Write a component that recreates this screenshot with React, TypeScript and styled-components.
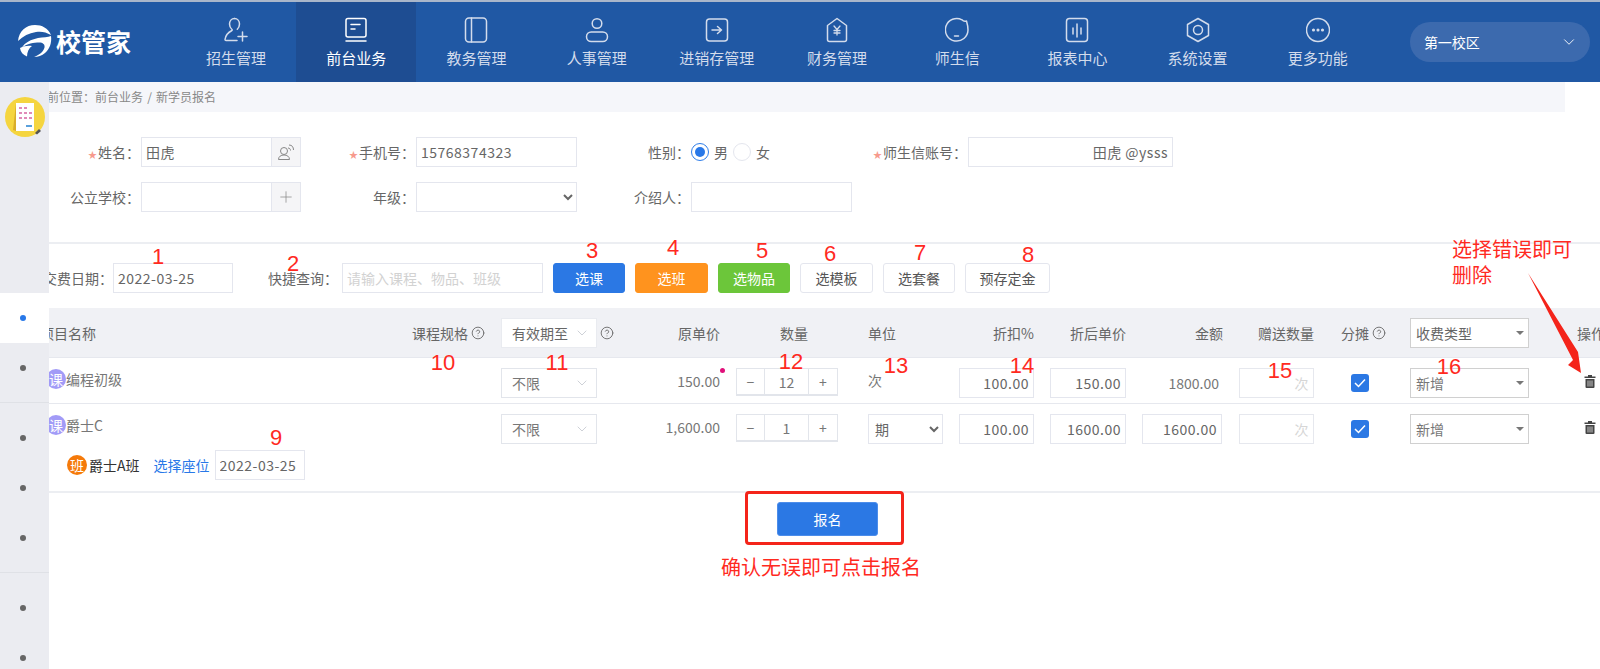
import React from "react";
import styled, { createGlobalStyle } from "styled-components";
import { CircleHelp, ChevronDown, Plus } from "lucide-react";

const GlobalStyle = createGlobalStyle`
  html, body { margin: 0; padding: 0; overflow: hidden; background: #fff; }
  * { box-sizing: border-box; }
  body { font-family: "Noto Sans CJK SC", "Noto Sans", sans-serif; font-size: 14px; color: #666; }
  input, select, button { font-family: inherit; }
`;

const Page = styled.div`
  position: relative;
  width: 1600px;
  height: 669px;
  overflow: hidden;
  background: #fff;
`;

/* ---------- header ---------- */
const Header = styled.header`
  display: flex;
  height: 82px;
  border-top: 2px solid #a9b6ca;
  background: #2058a4;
`;
const Logo = styled.div`
  display: flex;
  align-items: center;
  gap: 4px;
  width: 176px;
  padding: 0 0 2px 17px;
  color: #fff;
`;
const LogoText = styled.span`
  font-size: 25px;
  line-height: 30px;
  font-weight: 700;
  letter-spacing: 0;
`;
const NavItem = styled.div<{ $active?: boolean }>`
  display: flex;
  flex-direction: column;
  align-items: center;
  width: 120.2px;
  padding-top: 15px;
  color: ${(p) => (p.$active ? "#fff" : "#d3dcec")};
  background: ${(p) => (p.$active ? "#1e4d92" : "transparent")};
  svg { display: block; }
`;
const NavLabel = styled.span`
  margin-top: 5px;
  font-size: 15px;
  line-height: 20px;
  white-space: nowrap;
`;
const School = styled.div`
  display: flex;
  align-items: center;
  justify-content: space-between;
  width: 180px;
  height: 40px;
  margin: 20px 0 0 32px;
  padding: 0 12px 0 14px;
  border-radius: 20px;
  background: #3c6aae;
  color: #fff;
  font-size: 14px;
`;

/* ---------- body ---------- */
const Body = styled.div`
  display: flex;
  height: 587px;
`;
const Sidebar = styled.aside`
  position: relative;
  z-index: 1;
  flex: 0 0 49px;
  margin-right: -1px;
  display: flex;
  flex-direction: column;
  overflow: hidden;
  background: #ebecf1;
`;
const Avatar = styled.div`
  flex: none;
  height: 211px;
  padding: 15px 0 0 5px;
  svg { display: block; }
`;
const SideGroup = styled.div<{ $line?: boolean }>`
  flex: none;
  padding: ${(p) => (p.$line ? "10px 0 9px" : "0 0 9px")};
  border-bottom: 1px solid #dfe1e6;
  &:last-child { border-bottom: 0; }
`;
const SideItem = styled.div<{ $active?: boolean }>`
  display: flex;
  align-items: center;
  justify-content: center;
  height: 50px;
  padding-right: 3px;
  background: ${(p) => (p.$active ? "#fff" : "transparent")};
  &::before {
    content: "";
    width: 6px;
    height: 6px;
    border-radius: 50%;
    background: ${(p) => (p.$active ? "#2878e8" : "#666")};
  }
`;
const Main = styled.main`
  flex: 1;
  min-width: 0;
  overflow: hidden;
`;
const Crumb = styled.div`
  width: 1517px;
  height: 30px;
  background: #f5f6fa;
  color: #888;
  font-size: 12px;
  line-height: 30px;
  text-indent: -13px;
  word-spacing: 1.5px;
  white-space: nowrap;
`;

/* ---------- form ---------- */
const FormGrid = styled.section`
  display: grid;
  grid-template-columns: 93px 160px 115px 161px 114px 161px 116px 205px;
  grid-auto-rows: 30px;
  row-gap: 15px;
  padding: 25px 0 30px;
  border-bottom: 2px solid #eceef2;
`;
const Label = styled.label`
  display: flex;
  align-items: center;
  justify-content: flex-end;
  padding-right: 1px;
  color: #666;
  font-size: 14px;
  line-height: 20px;
  white-space: nowrap;
`;
const Star = styled.span`
  margin: 5px 1px 0 0;
  color: #f79a8d;
  font-size: 9px;
  line-height: 10px;
`;
const Field = styled.input<{ $w?: number; $right?: boolean }>`
  width: ${(p) => (p.$w ? `${p.$w}px` : "100%")};
  height: 30px;
  padding: 0 4px;
  border: 1px solid #e4e6ee;
  background: #fff;
  color: #666;
  font-size: 14px;
  letter-spacing: 0.5px;
  text-align: ${(p) => (p.$right ? "right" : "left")};
  outline: none;
  &::placeholder { color: #d2d2d2; letter-spacing: 0; }
`;
const Group = styled.div`
  display: flex;
  height: 30px;
  input { flex: 1; min-width: 0; border-right: 0; }
`;
const Addon = styled.span`
  flex: 0 0 30px;
  display: flex;
  align-items: center;
  justify-content: center;
  border: 1px solid #e4e6ee;
  background: #f5f5f7;
  color: #888;
`;
const NativeSelect = styled.select<{ $w?: number }>`
  width: ${(p) => (p.$w ? `${p.$w}px` : "100%")};
  height: 30px;
  padding: 0 2px;
  border: 1px solid #e4e6ee;
  border-radius: 0;
  background: #fff;
  color: #666;
  font-size: 14px;
  outline: none;
`;
const RadioRow = styled.div`
  display: flex;
  align-items: center;
  gap: 5px;
  height: 30px;
`;
const Radio = styled.span<{ $on?: boolean }>`
  display: flex;
  align-items: center;
  justify-content: center;
  width: 18px;
  height: 18px;
  border-radius: 50%;
  border: 1.5px solid ${(p) => (p.$on ? "#2f7ee9" : "#e4e6ee")};
  &::after {
    content: "";
    width: 10px;
    height: 10px;
    border-radius: 50%;
    background: ${(p) => (p.$on ? "#2878e8" : "transparent")};
  }
`;
const RadioText = styled.span`
  color: #666;
  line-height: 20px;
`;

/* ---------- toolbar ---------- */
const Toolbar = styled.section`
  display: flex;
  align-items: center;
  height: 64px;
  padding: 4px 0 0;
  margin-left: -5px;
`;
const ToolLabel = styled.label<{ $w: number }>`
  flex: 0 0 ${(p) => p.$w}px;
  padding-right: ${(p) => (p.$w > 80 ? 4 : 0)}px;
  text-align: right;
  color: #666;
  line-height: 20px;
  white-space: nowrap;
`;
const ToolBtn = styled.button<{ $w: number; $bg?: string }>`
  width: ${(p) => p.$w}px;
  height: 30px;
  margin-left: 10px;
  padding: 0;
  border: 1px solid ${(p) => p.$bg || "#e4e6ee"};
  border-radius: 3px;
  background: ${(p) => p.$bg || "#fff"};
  color: ${(p) => (p.$bg ? "#fff" : "#555")};
  font-size: 14px;
  line-height: 20px;
`;

/* ---------- table ---------- */
const COLS = "453px 124px 111px 132px 91px 91px 92px 97px 102px 69px 167px 23px";
const HeadRow = styled.div`
  display: grid;
  grid-template-columns: ${COLS};
  align-items: center;
  height: 50px;
  border-bottom: 1px solid #e6e8ee;
  background: #f0f1f5;
  color: #666;
  line-height: 20px;
  white-space: nowrap;
`;
const DataRow = styled.div<{ $h: number; $thick?: boolean }>`
  display: grid;
  grid-template-columns: ${COLS};
  align-items: start;
  height: ${(p) => p.$h}px;
  padding-top: 10px;
  border-bottom: ${(p) => (p.$thick ? "2px solid #eceef2" : "1px solid #e6e8ee")};
  color: #777;
  white-space: nowrap;
`;
const HeadName = styled.div`
  display: flex;
  justify-content: space-between;
  align-items: center;
  padding-right: 16px;
  text-indent: -8px;
  overflow: hidden;
`;
const HeadHelp = styled.span`
  display: inline-flex;
  align-items: center;
  gap: 3px;
  text-indent: 0;
  svg { flex: none; }
`;
const HeadCell = styled.div<{ $pl?: number; $pr?: number; $right?: boolean }>`
  display: flex;
  align-items: center;
  gap: 3px;
  justify-content: ${(p) => (p.$right ? "flex-end" : "flex-start")};
  padding-left: ${(p) => p.$pl || 0}px;
  padding-right: ${(p) => p.$pr || 0}px;
  overflow: hidden;
  svg { flex: none; }
`;
const DropBox = styled.div<{ $w: number; $tone?: string; $ink?: string }>`
  display: flex;
  align-items: center;
  justify-content: space-between;
  width: ${(p) => p.$w}px;
  height: 30px;
  padding: 0 6px 0 10px;
  border: 1px solid ${(p) => p.$tone || "#e2e5eb"};
  background: #fff;
  color: ${(p) => p.$ink || "#777"};
  font-size: 14px;
  line-height: 20px;
`;
const TypeBox = styled(DropBox)`
  padding: 0 4px 0 5px;
`;
const Caret = styled.span`
  width: 0;
  height: 0;
  border-left: 4px solid transparent;
  border-right: 4px solid transparent;
  border-top: 4px solid #777;
`;
const NameCell = styled.div`
  display: flex;
  flex-direction: column;
`;
const NameLine = styled.div`
  display: flex;
  align-items: center;
  gap: 0;
  height: 22px;
  margin-left: -2px;
  line-height: 20px;
  color: #777;
`;
const Badge = styled.span<{ $bg: string }>`
  flex: none;
  display: flex;
  align-items: center;
  justify-content: center;
  width: 20px;
  height: 20px;
  border-radius: 50%;
  background: ${(p) => p.$bg};
  color: #fff;
  font-size: 14px;
  line-height: 20px;
`;
const ClassLine = styled.div`
  display: flex;
  align-items: center;
  height: 30px;
  margin: 14px 0 0 19px;
`;
const ClassName = styled.span`
  margin-left: 2px;
  color: #333;
  line-height: 20px;
`;
const SeatLink = styled.a`
  margin: 0 5px 0 14px;
  color: #2878e8;
  line-height: 20px;
`;
const ValueCell = styled.div<{ $pr?: number; $lh?: number }>`
  position: relative;
  padding-right: ${(p) => p.$pr || 0}px;
  text-align: right;
  line-height: ${(p) => p.$lh || 30}px;
  font-size: 14px;
`;
const PinkDot = styled.i`
  position: absolute;
  top: 0;
  right: 11px;
  width: 5px;
  height: 5px;
  border-radius: 50%;
  background: #e0107a;
`;
const Stepper = styled.div`
  display: flex;
  width: 102px;
  height: 28px;
  border: 1px solid #e2e5eb;
  border-bottom-width: 2px;
  color: #777;
  line-height: 26px;
  text-align: center;
`;
const StepBtn = styled.span<{ $w: number }>`
  flex: 0 0 ${(p) => p.$w}px;
`;
const StepValue = styled.span`
  flex: 1;
  border-left: 1px solid #e2e5eb;
  border-right: 1px solid #e2e5eb;
`;
const UnitText = styled.div`
  line-height: 24px;
  color: #777;
`;
const CheckCell = styled.div`
  padding: 6px 0 0 10px;
`;
const Check = styled.span`
  display: flex;
  align-items: center;
  justify-content: center;
  width: 18px;
  height: 18px;
  border-radius: 3px;
  background: #2b78e4;
`;
const TrashCell = styled.div`
  padding: 7px 0 0 7px;
  svg { display: block; }
`;
const GiftField = styled(Field)`
  color: #d6d6d6;
  border-color: #e6e8ee;
`;
const Actions = styled.div`
  padding: 9px 0 0 729px;
`;
const SubmitBtn = styled.button`
  width: 101px;
  height: 34px;
  padding: 0;
  border: 1px solid #4d8dea;
  border-radius: 3px;
  background: #2b78e4;
  color: #fff;
  font-size: 14px;
`;

/* ---------- annotations laid over the page ---------- */
const Num = styled.span<{ $x: number; $y: number }>`
  position: absolute;
  z-index: 2;
  left: ${(p) => p.$x}px;
  top: ${(p) => p.$y}px;
  transform: translate(-50%, -50%);
  color: #ff2a1f;
  font-family: "Liberation Sans", sans-serif;
  font-size: 22px;
  line-height: 1;
`;
const Note = styled.div<{ $x: number; $y: number }>`
  position: absolute;
  z-index: 2;
  left: ${(p) => p.$x}px;
  top: ${(p) => p.$y}px;
  color: #ff2a1f;
  font-size: 20px;
  line-height: 26px;
  white-space: nowrap;
`;
const RedBox = styled.div`
  position: absolute;
  z-index: 2;
  left: 745px;
  top: 491px;
  width: 159px;
  height: 54px;
  border: 3px solid #f4241a;
  border-radius: 4px;
`;
const ArrowSvg = styled.svg`
  position: absolute;
  z-index: 2;
  left: 1520px;
  top: 265px;
`;

const Ic = ({ children, w = 24 }: { children: React.ReactNode; w?: number }) => (
  <svg width={w} height={26} viewBox="0 0 24 26" fill="none" stroke="currentColor" strokeWidth={1.5} strokeLinecap="round" strokeLinejoin="round">
    {children}
  </svg>
);

const navs: [string, React.ReactNode][] = [
  ["招生管理", <><path d="M10.5 1.5C7.5 1.5 5.5 4 5.5 7c0 2.5 1 4.3 2.5 5.5.3.3.2.8-.1 1C4 15.5 1.5 19 1 22.5c0 .6.3 1 1 1h11" /><path d="M10.5 1.5c3 0 5 2.5 5 5.5 0 2.2-.9 4-2.2 5.2" /><path d="M18.5 15v9M14 19.500h9" /></>],
  ["前台业务", <><rect x="2" y="1.500" width="20" height="18.500" rx="2" /><path d="M7 7.500h9M7 12h4M2 24h20" /></>],
  ["教务管理", <><rect x="1.500" y="1" width="21" height="24" rx="3.500" /><path d="M7.500 1v24" /></>],
  ["人事管理", <><circle cx="12" cy="6.500" r="4.800" /><rect x="1.500" y="15" width="21" height="9.500" rx="4.700" /></>],
  ["进销存管理", <><rect x="1.500" y="2" width="21" height="22" rx="3" /><path d="M7 13h9.500M12.500 9.500l4 3.500-4 3.500" /></>],
  ["财务管理", <><path d="M12 1.500l9.500 7v14a2 2 0 0 1-2 2h-15a2 2 0 0 1-2-2v-14z" /><path d="M9 9l3 3.500L15 9M12 12.500V18M9 13.500h6M9 16h6" strokeWidth={1.300} /></>],
  ["师生信", <><path d="M17 2.800A11.300 11.300 0 1 0 23 13c0-3-.6-6-1.500-9-1.500.5-3.300.2-4.500-1.200z" /><path d="M9.500 19h4" /></>],
  ["报表中心", <><rect x="1.500" y="1.500" width="21" height="23" rx="3" /><path d="M8 11v6M12 7v13M16 11v6" /></>],
  ["系统设置", <><path d="M12 1.500l10.500 6v11L12 24.500l-10.500-6v-11z" /><circle cx="12" cy="13" r="4.500" /></>],
  ["更多功能", <><circle cx="12" cy="13" r="11.500" /><circle cx="7.500" cy="13" r=".8" /><circle cx="12" cy="13" r=".8" /><circle cx="16.500" cy="13" r=".8" /></>],
];

const LogoMark = () => (
  <svg width="35" height="34" viewBox="0 0 35 34" fill="#fff">
    <path d="M1 17C2 7 9 1 18 1c7 0 13 3 16 10-5-3-10-4-15-3C12 9 6 12 1 17z" />
    <path d="M34 12c1 7-1.500 13-6 17-3 2.500-7 4-11 4 5-2 9.500-5 10.500-9.500.6-3-1.500-5-5.500-5-5 0-12 1-17 5 3-5 9-8 16-9.500 5-1 10-.5 13-2z" />
    <path d="M3 24c4-2 8-2.800 12-2-3 2-5 6-5 10.500C6 31 3.500 28 3 24z" />
  </svg>
);

const AvatarMark = () => (
  <svg width="40" height="40" viewBox="0 0 40 40">
    <circle cx="20" cy="20" r="20" fill="#f5d53f" />
    <path d="M8 33L11 6v28z" fill="#d9ad2a" />
    <rect x="11" y="6" width="18" height="28" fill="#fff" />
    <g fill="#e08ab8">
      <rect x="14" y="10" width="3" height="2" /><rect x="19" y="10" width="3" height="2" />
      <rect x="14" y="15" width="3" height="2" /><rect x="19" y="15" width="3" height="2" /><rect x="24" y="15" width="3" height="2" />
      <rect x="14" y="20" width="3" height="2" /><rect x="19" y="20" width="3" height="2" /><rect x="24" y="20" width="3" height="2" />
    </g>
    <rect x="21" y="28" width="6" height="2" fill="#5aa0dc" />
    <path d="M30 36l4-4 2 2-4 3.500z" fill="#555" />
  </svg>
);

const PeopleIcon = () => (
  <svg width="18" height="18" viewBox="0 0 18 18" fill="none" stroke="#888" strokeWidth="1">
    <circle cx="7" cy="8" r="3.500" />
    <path d="M1.500 16.500c0-3 2.500-4.500 5.500-4.500s5.500 1.500 5.500 4.500z" />
    <path d="M11 5c1.500 0 2.500 1 2.500 2.500M12 2c3 0 4.500 2 4.500 5" />
  </svg>
);

const Trash = () => (
  <svg width="12" height="13" viewBox="0 0 12 13">
    <path d="M4 0h4v1.500h3.500V3H.5V1.500H4z" fill="#444" />
    <path d="M1.500 4h9v8a1 1 0 0 1-1 1h-7a1 1 0 0 1-1-1z" fill="#444" />
    <path d="M4 5.500v6M6 5.500v6M8 5.500v6" stroke="#fff" strokeWidth=".7" />
  </svg>
);

const Tick = () => (
  <svg width="12" height="10" viewBox="0 0 12 10" fill="none" stroke="#fff" strokeWidth="1.500">
    <path d="M1 5l3.500 3.500L11 1.500" />
  </svg>
);

const Help = () => <CircleHelp size={14} strokeWidth={1.5} color="#666" />;
const Chevron = () => <ChevronDown size={16} strokeWidth={1} color="#b5b9c2" />;

const numbers: [string, number, number][] = [
  ["1", 158, 257], ["2", 293, 264], ["3", 592, 251], ["4", 673, 248], ["5", 762, 251], ["6", 830, 254],
  ["7", 920, 253], ["8", 1028, 255], ["9", 276, 438], ["10", 443, 363], ["11", 557, 363], ["12", 791, 362],
  ["13", 896, 366], ["14", 1022, 366], ["15", 1280, 371], ["16", 1449, 367],
];

const Row = ({ price, qty, unit, gross, dot, thick, h, name, extra }: {
  price: string; qty: string; unit: React.ReactNode; gross: React.ReactNode; dot?: boolean; thick?: boolean; h: number; name: string; extra?: React.ReactNode;
}) => (
  <DataRow $h={h} $thick={thick}>
    <NameCell>
      <NameLine><Badge $bg="#a29bf7">课</Badge>{name}</NameLine>
      {extra}
    </NameCell>
    <DropBox $w={96}>不限<Chevron /></DropBox>
    <ValueCell $pr={16} $lh={26}>{price}{dot && <PinkDot />}</ValueCell>
    <Stepper>
      <StepBtn $w={27}>−</StepBtn>
      <StepValue>{qty}</StepValue>
      <StepBtn $w={28}>+</StepBtn>
    </Stepper>
    {unit}
    <Field $w={75} $right readOnly defaultValue="100.00" />
    <Field $w={76} $right readOnly defaultValue={price === "150.00" ? "150.00" : "1600.00"} />
    {gross}
    <GiftField $w={75} $right readOnly defaultValue="次" />
    <CheckCell><Check><Tick /></Check></CheckCell>
    <TypeBox $w={119} $tone="#d0d0d0">新增<Caret /></TypeBox>
    <TrashCell><Trash /></TrashCell>
  </DataRow>
);

export default function App() {
  return (
    <Page>
      <GlobalStyle />
      <Header>
        <Logo><LogoMark /><LogoText>校管家</LogoText></Logo>
        {navs.map(([label, icon], i) => (
          <NavItem key={label} $active={i === 1}>
            <Ic>{icon}</Ic>
            <NavLabel>{label}</NavLabel>
          </NavItem>
        ))}
        <School>第一校区<ChevronDown size={18} strokeWidth={1.2} /></School>
      </Header>
      <Body>
        <Sidebar>
          <Avatar><AvatarMark /></Avatar>
          <SideGroup><SideItem $active /><SideItem /></SideGroup>
          <SideGroup $line><SideItem /><SideItem /><SideItem /></SideGroup>
          <SideGroup $line><SideItem /><SideItem /></SideGroup>
        </Sidebar>
        <Main>
          <Crumb>当前位置：前台业务 / 新学员报名</Crumb>
          <FormGrid>
            <Label><Star>★</Star>姓名：</Label>
            <Group><Field readOnly defaultValue="田虎" /><Addon><PeopleIcon /></Addon></Group>
            <Label><Star>★</Star>手机号：</Label>
            <Field readOnly defaultValue="15768374323" />
            <Label>性别：</Label>
            <RadioRow><Radio $on /><RadioText>男</RadioText><Radio /><RadioText>女</RadioText></RadioRow>
            <Label><Star>★</Star>师生信账号：</Label>
            <Field $right readOnly defaultValue="田虎 @ysss" />

            <Label>公立学校：</Label>
            <Group><Field readOnly /><Addon><Plus size={18} strokeWidth={1} /></Addon></Group>
            <Label>年级：</Label>
            <NativeSelect><option></option></NativeSelect>
            <Label>介绍人：</Label>
            <Field readOnly />
          </FormGrid>
          <Toolbar>
            <ToolLabel $w={70}>交费日期：</ToolLabel>
            <Field $w={120} readOnly defaultValue="2022-03-25" />
            <ToolLabel $w={109}>快捷查询：</ToolLabel>
            <Field $w={201} placeholder="请输入课程、物品、班级" />
            <ToolBtn $w={72} $bg="#2b78e4">选课</ToolBtn>
            <ToolBtn $w={73} $bg="#ff931e">选班</ToolBtn>
            <ToolBtn $w={72} $bg="#6cc63a">选物品</ToolBtn>
            <ToolBtn $w={73}>选模板</ToolBtn>
            <ToolBtn $w={72}>选套餐</ToolBtn>
            <ToolBtn $w={85}>预存定金</ToolBtn>
          </Toolbar>
          <HeadRow>
            <HeadName><span>项目名称</span><HeadHelp>课程规格<Help /></HeadHelp></HeadName>
            <HeadCell><DropBox $w={96} $tone="#e9ebf0" $ink="#666">有效期至<Chevron /></DropBox><Help /></HeadCell>
            <HeadCell $right $pr={16}>原单价</HeadCell>
            <HeadCell $pl={44}>数量</HeadCell>
            <HeadCell>单位</HeadCell>
            <HeadCell $right $pr={16}>折扣%</HeadCell>
            <HeadCell $right $pr={16}>折后单价</HeadCell>
            <HeadCell $right $pr={16}>金额</HeadCell>
            <HeadCell $pl={19}>赠送数量</HeadCell>
            <HeadCell>分摊<Help /></HeadCell>
            <HeadCell><TypeBox $w={119} $tone="#d0d0d0" $ink="#666">收费类型<Caret /></TypeBox></HeadCell>
            <HeadCell>操作</HeadCell>
          </HeadRow>
          <Row
            h={46}
            name="编程初级"
            price="150.00"
            qty="12"
            dot
            unit={<UnitText>次</UnitText>}
            gross={<ValueCell $pr={20}>1800.00</ValueCell>}
          />
          <Row
            h={89}
            thick
            name="爵士C"
            price="1,600.00"
            qty="1"
            unit={<NativeSelect $w={75}><option>期</option></NativeSelect>}
            gross={<Field $w={80} $right readOnly defaultValue="1600.00" />}
            extra={
              <ClassLine>
                <Badge $bg="#f57a0a">班</Badge>
                <ClassName>爵士A班</ClassName>
                <SeatLink>选择座位</SeatLink>
                <Field $w={90} readOnly defaultValue="2022-03-25" />
              </ClassLine>
            }
          />
          <Actions><SubmitBtn>报名</SubmitBtn></Actions>
        </Main>
      </Body>

      {numbers.map(([t, x, y]) => <Num key={t} $x={x} $y={y}>{t}</Num>)}
      <Note $x={1452} $y={236}>选择错误即可</Note>
      <Note $x={1452} $y={262}>删除</Note>
      <ArrowSvg width="70" height="115" viewBox="1520 265 70 115">
        <path d="M1528 273L1578 352 1581 373 1568 365 1573 360z" fill="#f4241a" />
      </ArrowSvg>
      <RedBox />
      <Note $x={721} $y={554}>确认无误即可点击报名</Note>
    </Page>
  );
}
